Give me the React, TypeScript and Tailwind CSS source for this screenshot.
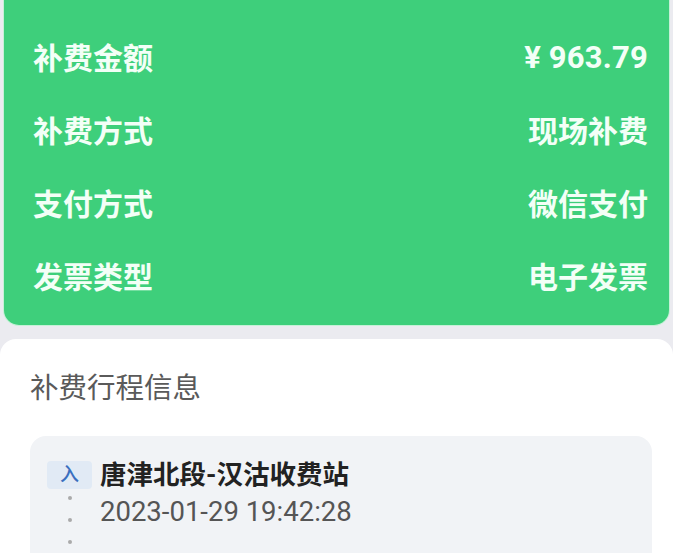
import React from "react";

const font = { fontFamily: 'Roboto, "Noto Sans CJK SC", sans-serif' };

const rows = [
  ["补费金额", "¥ 963.79"],
  ["补费方式", "现场补费"],
  ["支付方式", "微信支付"],
  ["发票类型", "电子发票"],
];

export default function App() {
  return (
    <div className="h-[553px] w-[673px] overflow-hidden bg-[#ebebf0]" style={font}>
      <div className="mx-[3px] rounded-b-2xl bg-[#3ecf7b] border-x border-b border-white/70 pl-[29px] pr-[21px] pt-[22px] pb-[11px]">
        {rows.map(([k, v]) => (
          <div key={k} className="flex h-[73px] items-center justify-between text-[30px] font-bold text-[#f3fff7]">
            <span>{k}</span>
            <span className={v.startsWith("¥") ? "text-[31px] tracking-[0.2px]" : ""}>{v}</span>
          </div>
        ))}
      </div>

      <div className="mt-[13px] h-[400px] rounded-t-2xl bg-white px-[30px] pt-[31px]">
        <div className="text-[28.5px] leading-[38px] text-[#5a5a5a]">补费行程信息</div>
        <div className="mt-[28px] h-[200px] rounded-2xl bg-[#f1f3f6] pl-[17px] pt-[22px] mr-[-9px]">
          <div className="flex items-center gap-2">
            <span className="flex h-[28px] w-[45px] items-center justify-center rounded-sm bg-[#e1eaf5] text-[19px] font-medium text-[#3b6fbf]">入</span>
            <span className="text-[26.5px] font-bold leading-[34px] text-[#222]">唐津北段-汉沽收费站</span>
          </div>
          <div className="flex items-start gap-2 mt-[4px]">
            <div className="flex w-[45px] flex-col items-center gap-[18px] pt-0">
              <span className="h-[4px] w-[4px] rounded-full bg-[#aaa]" />
              <span className="h-[4px] w-[4px] rounded-full bg-[#aaa]" />
              <span className="h-[4px] w-[4px] rounded-full bg-[#aaa]" />
            </div>
            <span className="text-[27.5px] leading-[32px] text-[#555]">2023-01-29 19:42:28</span>
          </div>
        </div>
      </div>
    </div>
  );
}
